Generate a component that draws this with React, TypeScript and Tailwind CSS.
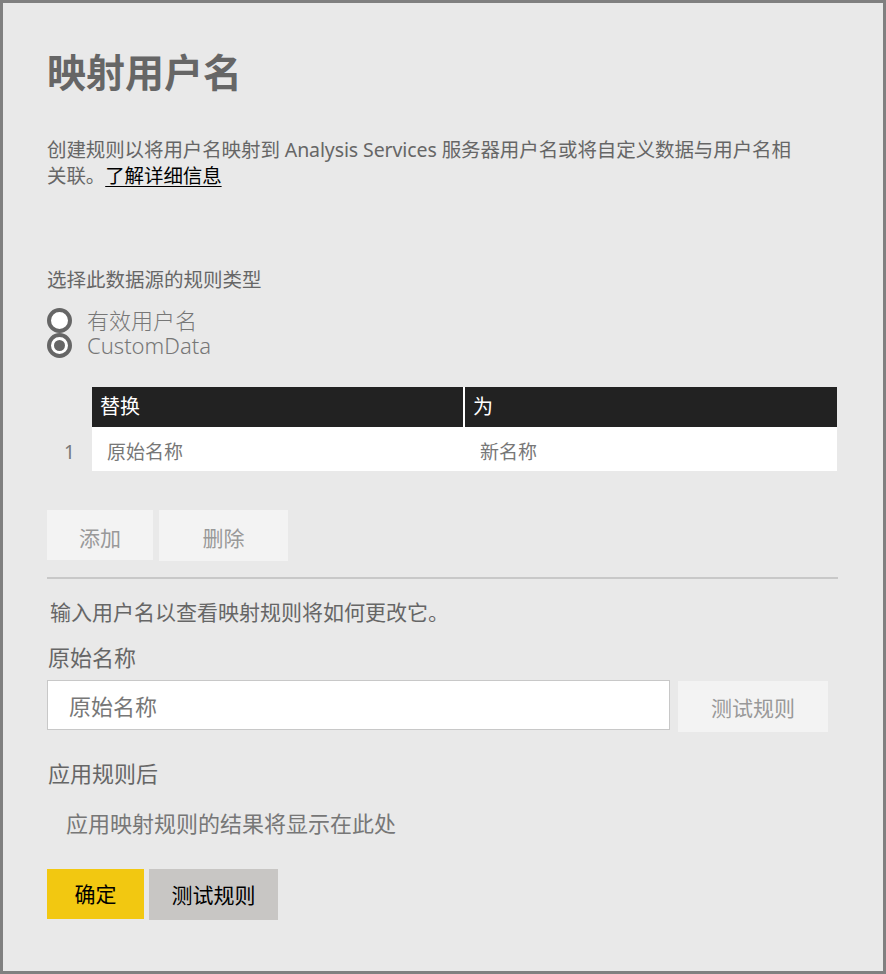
const FONT = "font-['Noto_Sans','Noto_Sans_CJK_SC',sans-serif]";

function Radio({ checked, label }: { checked?: boolean; label: string }) {
  return (
    <div className="flex items-center h-[25px]">
      <div className="w-[25px] h-[25px] rounded-full border-[4px] border-[#666] bg-white flex items-center justify-center">
        {checked && <div className="w-[11px] h-[11px] rounded-full bg-[#666]" />}
      </div>
      <span className="ml-[15px] text-[22px] leading-[25px] font-light text-[#777]">
        {label}
      </span>
    </div>
  );
}

export default function App() {
  return (
    <div
      className={`w-[886px] h-[974px] border-[3px] border-[#808080] bg-[#e9e9e9] ${FONT}`}
    >
      <div className="pl-[44px] pt-[44px] flex flex-col w-[835px]">
        <h1 className="text-[39px] leading-[50px] font-bold text-[#666]">映射用户名</h1>

        <p className="mt-[40px] text-[19.5px] leading-[26px] text-[#666] w-[820px] tracking-[-0.1px]">
          <span className="whitespace-nowrap">
            创建规则以将用户名映射到 Analysis Services 服务器用户名或将自定义数据与用户名相
          </span>
          <br />
          关联。
          <a href="#" className="text-black underline underline-offset-[3px]">
            了解详细信息
          </a>
        </p>

        <div className="mt-[78px] text-[19.5px] leading-[26px] text-[#666]">
          选择此数据源的规则类型
        </div>

        <div className="mt-[15px] flex flex-col">
          <Radio label="有效用户名" />
          <Radio checked label="CustomData" />
        </div>

        <div className="mt-[29px] flex flex-col">
          <div className="flex">
            <div className="w-[45px]" />
            <div className="flex w-[745px] h-[40px] bg-[#222] text-white text-[20px]">
              <div className="w-[371px] pl-[8px] flex items-center">替换</div>
              <div className="w-[2px] bg-white" />
              <div className="flex-1 pl-[8px] flex items-center">为</div>
            </div>
          </div>
          <div className="flex h-[44px] text-[19px] text-[#777]">
            <div className="w-[45px] pt-[6px] flex items-center justify-center">1</div>
            <div className="flex w-[745px] bg-white">
              <div className="w-[373px] pl-[15px] pt-[7px] flex items-center">原始名称</div>
              <div className="flex-1 pl-[15px] pt-[7px] flex items-center">新名称</div>
            </div>
          </div>
        </div>

        <div className="mt-[39px] flex gap-[6px]">
          <button className="w-[106px] h-[50px] pt-[7px] bg-[#f3f3f3] text-[21px] text-[#999]">添加</button>
          <button className="w-[129px] h-[51px] pt-[7px] bg-[#f3f3f3] text-[21px] text-[#999]">删除</button>
        </div>

        <div className="mt-[16px] h-[2px] w-[791px] bg-[#c8c8c8]" />

        <div className="mt-[19px] ml-[3px] text-[21px] leading-[28px] text-[#666]">
          输入用户名以查看映射规则将如何更改它。
        </div>

        <div className="mt-[17px] ml-[1px] text-[22px] leading-[28px] text-[#666]">原始名称</div>

        <div className="mt-[9px] flex items-start gap-[8px]">
          <input
            placeholder="原始名称"
            className="w-[623px] h-[50px] bg-white border border-[#c8c8c8] pl-[21px] pt-[2px] text-[22px] text-[#555] placeholder:text-[#777] outline-none"
          />
          <button className="mt-[1px] w-[150px] h-[51px] pt-[4px] bg-[#f3f3f3] text-[21px] text-[#999]">
            测试规则
          </button>
        </div>

        <div className="mt-[27px] ml-[1px] text-[22px] leading-[28px] text-[#666]">应用规则后</div>

        <div className="mt-[22px] ml-[19px] text-[22px] leading-[28px] text-[#777]">
          应用映射规则的结果将显示在此处
        </div>

        <div className="mt-[32px] flex gap-[5px]">
          <button className="w-[97px] h-[50px] pt-[2px] bg-[#f2c811] text-[21px] text-black">确定</button>
          <button className="w-[129px] h-[51px] pt-[2px] bg-[#c8c6c4] text-[21px] text-black">测试规则</button>
        </div>
      </div>
    </div>
  );
}
